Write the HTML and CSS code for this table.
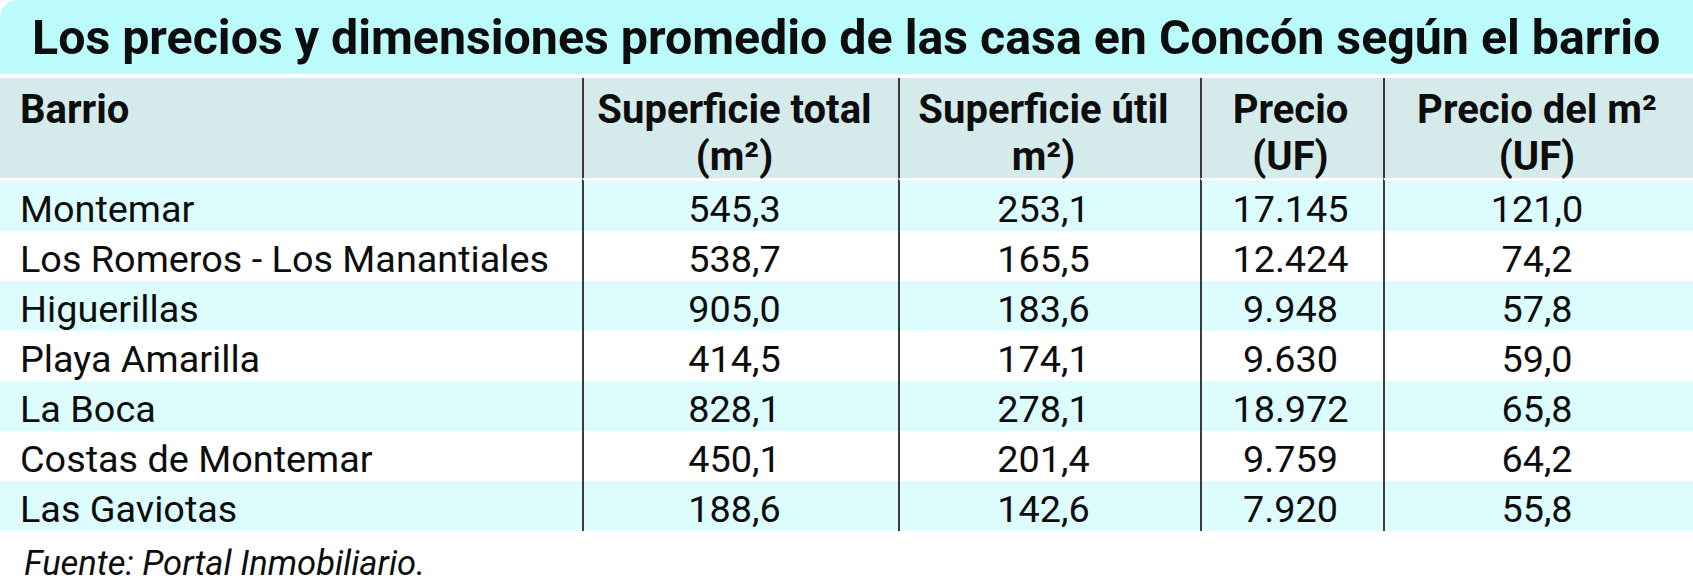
FILE: index.html
```html
<!DOCTYPE html>
<html lang="es">
<head>
<meta charset="utf-8">
<title>Precios casas Concón</title>
<link rel="stylesheet" href="styles.css">
</head>
<body>
<div class="title">Los precios y dimensiones promedio de las casa en Concón según el barrio</div>
<div class="table">
  <div class="row head">
    <div class="cell name">Barrio</div>
    <div class="cell">Superficie total<br>(m²)</div>
    <div class="cell">Superficie útil<br>m²)</div>
    <div class="cell">Precio<br>(UF)</div>
    <div class="cell">Precio del m²<br>(UF)</div>
  </div>
  <div class="row odd first">
    <div class="cell name">Montemar</div><div class="cell">545,3</div><div class="cell">253,1</div><div class="cell">17.145</div><div class="cell">121,0</div>
  </div>
  <div class="row">
    <div class="cell name">Los Romeros - Los Manantiales</div><div class="cell">538,7</div><div class="cell">165,5</div><div class="cell">12.424</div><div class="cell">74,2</div>
  </div>
  <div class="row odd">
    <div class="cell name">Higuerillas</div><div class="cell">905,0</div><div class="cell">183,6</div><div class="cell">9.948</div><div class="cell">57,8</div>
  </div>
  <div class="row">
    <div class="cell name">Playa Amarilla</div><div class="cell">414,5</div><div class="cell">174,1</div><div class="cell">9.630</div><div class="cell">59,0</div>
  </div>
  <div class="row odd">
    <div class="cell name">La Boca</div><div class="cell">828,1</div><div class="cell">278,1</div><div class="cell">18.972</div><div class="cell">65,8</div>
  </div>
  <div class="row">
    <div class="cell name">Costas de Montemar</div><div class="cell">450,1</div><div class="cell">201,4</div><div class="cell">9.759</div><div class="cell">64,2</div>
  </div>
  <div class="row odd">
    <div class="cell name">Las Gaviotas</div><div class="cell">188,6</div><div class="cell">142,6</div><div class="cell">7.920</div><div class="cell">55,8</div>
  </div>
</div>
<div class="source">Fuente: Portal Inmobiliario.</div>
</body>
</html>
```

FILE: styles.css
```css
html, body {
  margin: 0;
  padding: 0;
  background: #ffffff;
}
body {
  font-family: Roboto, "Open Sans", "Liberation Sans", sans-serif;
  color: #0d0d0d;
  width: 1693px;
}
.title {
  height: 74px;
  line-height: 76px;
  padding-left: 32px;
  background: #bcfbfc;
  border-top-left-radius: 18px;
  font-weight: 700;
  font-size: 48.3px;
  white-space: nowrap;
  margin-bottom: 4px;
}
.row {
  display: grid;
  grid-template-columns: 582px 316px 302px 183px 1fr;
}
.cell {
  box-sizing: border-box;
  text-align: center;
  border-left: 2px solid #3c3c3c;
  white-space: nowrap;
  font-size: 37.8px;
  height: 50px;
  line-height: 43px;
  padding-top: 7px;
}
.cell.name {
  text-align: left;
  border-left: none;
  padding-left: 20px;
}
.row .cell:nth-child(2),
.row .cell:nth-child(3) {
  padding-right: 13px;
}
.row .cell:nth-child(4),
.row .cell:nth-child(5) {
  padding-right: 4px;
}
.row.odd .cell {
  background: #ddfcfd;
}
.row.first .cell {
  height: 53px;
  border-top: 3px solid transparent;
  background-clip: padding-box;
}
.head .cell {
  background: #d5ebeb;
  font-weight: 700;
  font-size: 40px;
  height: 100px;
  line-height: 47px;
  padding-top: 8px;
}
.source {
  font-style: italic;
  font-size: 34.5px;
  line-height: 44px;
  padding-left: 24px;
  padding-top: 10px;
  white-space: nowrap;
}
```
